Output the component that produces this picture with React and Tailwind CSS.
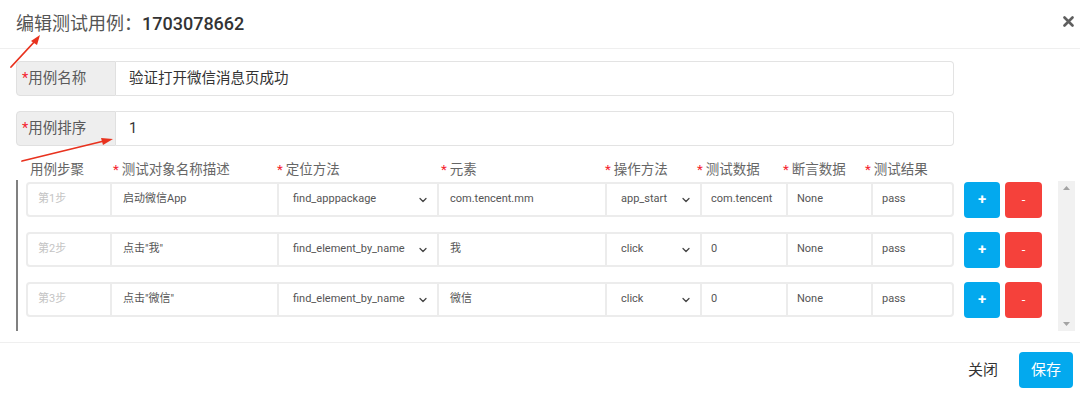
import React from 'react';
import { ChevronDown } from 'lucide-react';

const FONT = { fontFamily: 'Roboto, "Noto Sans CJK SC", sans-serif' };

const steps = [
  { step: '第1步', desc: '启动微信App', locator: 'find_apppackage', element: 'com.tencent.mm', action: 'app_start', data: 'com.tencent', assert: 'None', result: 'pass' },
  { step: '第2步', desc: '点击"我"', locator: 'find_element_by_name', element: '我', action: 'click', data: '0', assert: 'None', result: 'pass' },
  { step: '第3步', desc: '点击"微信"', locator: 'find_element_by_name', element: '微信', action: 'click', data: '0', assert: 'None', result: 'pass' },
];

function Star() {
  return <span className="text-[#f5222d] mr-[3px]">*</span>;
}

function FormRow({ label, value }) {
  return (
    <div className="flex h-[35px] w-[938px]">
      <div className="w-[100px] shrink-0 flex items-center pl-[5px] bg-[#eeeeee] border border-[#e0e0e0] rounded-l-[4px] text-[14.5px] text-[#5a5a5a]">
        <span className="text-[#f5222d]">*</span>{label}
      </div>
      <div className="flex-1 flex items-center pl-[13px] border border-l-0 border-[#e3e3e3] rounded-r-[4px] text-[14.5px] text-[#333]">
        {value}
      </div>
    </div>
  );
}

function Cell({ w, children, pl = 'pl-[11px]', first }) {
  return (
    <div className={`${w} h-full flex items-center ${pl} ${first ? '' : 'border-l-2 border-[#ececec]'}`}>
      {children}
    </div>
  );
}

function SelectCell({ w, value, pl }) {
  return (
    <div className={`${w} h-full flex items-center justify-between ${pl} pr-[8px] border-l-2 border-[#ececec]`}>
      <span>{value}</span>
      <ChevronDown size={12} strokeWidth={2.5} className="text-[#444]" />
    </div>
  );
}

function StepRow({ s }) {
  return (
    <div className="flex items-center h-[35px]">
      <div className="flex h-full w-[928px] border-2 border-[#ececec] rounded-[4px] text-[11px] text-[#555] overflow-hidden">
        <Cell w="w-[82px]" first pl="pl-[10px]"><span className="text-[#c4c4c4]">{s.step}</span></Cell>
        <Cell w="w-[167px]">{s.desc}</Cell>
        <SelectCell w="w-[160px]" value={s.locator} pl="pl-[14px]" />
        <Cell w="w-[168px]" pl="pl-[11px]">{s.element}</Cell>
        <SelectCell w="w-[95px]" value={s.action} pl="pl-[14px]" />
        <Cell w="w-[86px]" pl="pl-[9px]">{s.data}</Cell>
        <Cell w="w-[85px]" pl="pl-[9px]">{s.assert}</Cell>
        <Cell w="flex-1" pl="pl-[9px]">{s.result}</Cell>
      </div>
      <button className="ml-[10px] w-[36px] h-[36px] rounded-[4px] bg-[#03a9ee] text-white text-[15px] font-bold flex items-center justify-center">+</button>
      <button className="ml-[5px] w-[37px] h-[36px] rounded-[4px] bg-[#f5413b] text-white text-[13px] flex items-center justify-center">-</button>
    </div>
  );
}

export default function App() {
  return (
    <div className="relative w-[1080px] h-[397px] bg-white overflow-hidden" style={FONT}>
      {/* header */}
      <div className="h-[49px] border-b border-[#efefef] flex items-center justify-between pl-[16px] pr-[6px]">
        <div className="text-[18px] leading-none">
          <span className="text-[#555]">编辑测试用例：</span>
          <span className="text-[#333] font-medium">1703078662</span>
        </div>
        <svg width="11" height="11" viewBox="0 0 11 11" className="mb-[6px]">
          <path d="M1.5 1.5 L9.5 9.5 M9.5 1.5 L1.5 9.5" stroke="#5f5f5f" strokeWidth="2.6" strokeLinecap="round" />
        </svg>
      </div>

      {/* body */}
      <div className="pl-[16px]">
        <div className="mt-[12px]"><FormRow label="用例名称" value="验证打开微信消息页成功" /></div>
        <div className="mt-[15px]"><FormRow label="用例排序" value="1" /></div>

        <div className="mt-[12px] h-[22px] flex items-center text-[13.5px] text-[#666]">
          <div className="w-[97px] pl-[14px]">用例步聚</div>
          <div className="w-[164px]"><Star />测试对象名称描述</div>
          <div className="w-[164px]"><Star />定位方法</div>
          <div className="w-[164px]"><Star />元素</div>
          <div className="w-[92px]"><Star />操作方法</div>
          <div className="w-[86px]"><Star />测试数据</div>
          <div className="w-[82px]"><Star />断言数据</div>
          <div><Star />测试结果</div>
        </div>

        <div className="flex h-[151px] pr-[5px]">
          <div className="w-[2px] bg-[#808080]" />
          <div className="flex-1 pl-[8px] pt-[2px] flex flex-col gap-[15px]">
            {steps.map((s) => <StepRow key={s.step} s={s} />)}
          </div>
          <div className="w-[17px] mt-[1px] bg-[#f1f1f1] flex flex-col items-center justify-between py-[5px]">
            <svg width="7" height="4" viewBox="0 0 7 4"><path d="M0 4 L3.5 0 L7 4 Z" fill="#a3a3a3" /></svg>
            <svg width="7" height="4" viewBox="0 0 7 4"><path d="M0 0 L3.5 4 L7 0 Z" fill="#a3a3a3" /></svg>
          </div>
        </div>
      </div>

      {/* footer */}
      <div className="mt-[11px] border-t border-[#efefef] h-[55px] flex items-center justify-end pr-[7px]">
        <span className="text-[15px] text-[#333] mr-[21px]">关闭</span>
        <button className="w-[54px] h-[36px] rounded-[4px] bg-[#03a9ee] text-white text-[15px]">保存</button>
      </div>

      {/* red annotation arrows */}
      <svg className="absolute left-0 top-0 pointer-events-none" width="1080" height="397">
        <path d="M11 67 L36 40" stroke="#e8321e" strokeWidth="1.8" strokeLinecap="round" />
        <path d="M40 35 L31 41 L37 45 Z" fill="#e8321e" />
        <path d="M22 161 L104 141" stroke="#e8321e" strokeWidth="1.8" strokeLinecap="round" />
        <path d="M113 139 L101 138 L103 145 Z" fill="#e8321e" />
      </svg>
    </div>
  );
}
